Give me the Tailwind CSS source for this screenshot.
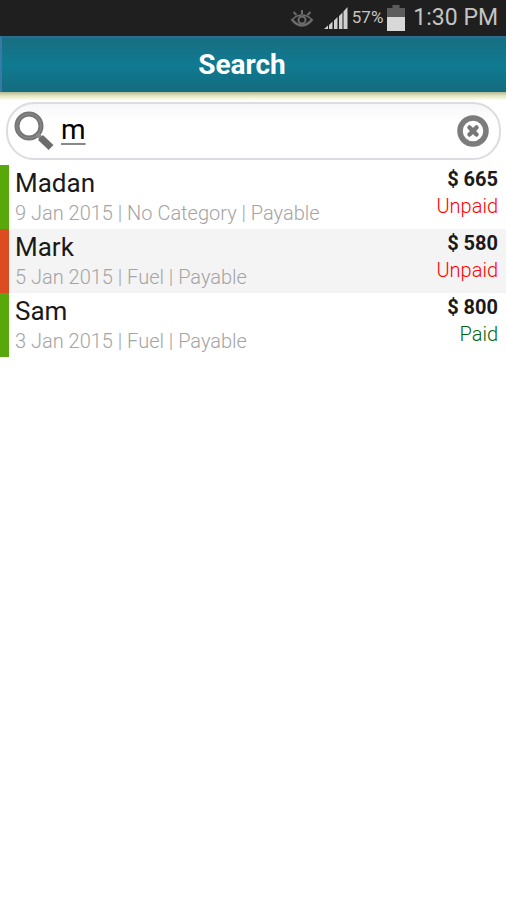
<!DOCTYPE html>
<html lang="en">
<head>
    <meta charset="UTF-8">
    <meta name="viewport" content="width=device-width, initial-scale=1.0">
    <title>Search</title>
    <script src="https://cdn.jsdelivr.net/npm/@tailwindcss/browser@4"></script>
</head>
<body class="min-h-screen bg-white font-[Roboto,sans-serif] text-[#1a1a1a]">

<!-- Status bar -->
<div class="flex h-9 items-center justify-end bg-[#1f1f1f] pr-2 text-[#c4c4c4]">
    <svg class="mr-2.5 h-5 w-6" viewBox="0 0 24 20" fill="none" stroke="#6c6c6c" stroke-width="2.500" aria-hidden="true">
        <path d="M1.500 11C5 15.500 8.500 17.500 12 17.500S19 15.500 22.500 11"/>
        <path d="M3 11C6 8 9 7 12 7s6 1 9 4" stroke-width="1.500"/>
        <circle cx="12" cy="12" r="3.500" stroke-width="2"/>
        <path d="M12 6V2M6.500 7L3.500 4M17.500 7L20.500 4" stroke-width="2"/>
    </svg>
    <svg class="mr-1 h-[22px] w-6" viewBox="0 0 24 22" fill="#d0d0d0" aria-hidden="true">
        <path d="M0 22L4 18.500V22zM5 18L8.500 14.500V22H5zM10 13.500L13.500 10V22H10zM15 9L18.500 5.500V22H15zM19.500 4.500L23.500 0V22H19.500z"/>
    </svg>
    <span class="text-[17px]">57%</span>
    <svg class="mr-2 ml-1 h-[26px] w-[18px]" viewBox="0 0 18 26" aria-hidden="true">
        <path d="M5.500 0H12.500V3H18V12H0V3H5.500z" fill="#5c5c5c"/>
        <path d="M0 12H18V26H0z" fill="#d8d8d8"/>
    </svg>
    <span class="text-[23px]">1:30 PM</span>
</div>

<!-- Title bar -->
<header class="flex h-14 items-center justify-center border-t-2 border-l-2 border-t-[#2b6c94] border-l-[#3a78a8] bg-linear-to-b from-[#176e81] via-[#0f7a92] to-[#146c7e] pr-6">
    <h1 class="text-[28px] font-bold text-white">Search</h1>
</header>
<div class="h-2 bg-linear-to-b from-[#b5b795] via-[#e4e8bd] to-[#fdfdf5]"></div>

<main>
    <form class="mt-0.5 mr-[5px] mb-[5px] ml-1.5 flex h-[58px] items-center rounded-[28px] border-2 border-[#dcdce0] bg-linear-to-b from-[#f6f6f8] via-white via-30% to-white pr-2.5 pl-1.5" onsubmit="return false">
        <svg class="h-10 w-10 shrink-0" viewBox="0 0 40 40" fill="none" aria-hidden="true">
            <circle cx="15" cy="15" r="12" stroke="#747474" stroke-width="5"/>
            <circle cx="15" cy="15" r="12" stroke="#858585" stroke-width="1.500"/>
            <path d="M23 23L28 28" stroke="#8a8a8a" stroke-width="4"/>
            <path d="M26.500 26.500L37 36.500" stroke="#6c6c6c" stroke-width="7"/>
        </svg>
        <input id="query" type="text" value="m" aria-label="Search" class="ml-[7px] h-12 min-w-0 flex-1 pb-1 text-[28px] text-black underline decoration-[#888] decoration-2 underline-offset-4 outline-none">
        <button type="button" id="clear" aria-label="Clear" class="shrink-0">
            <svg class="h-8 w-8" viewBox="0 0 32 32" fill="none" aria-hidden="true">
                <circle cx="16" cy="16" r="13" stroke="#7c7c7c" stroke-width="5.500"/>
                <path d="M12.500 12.500L19.500 19.500M19.500 12.500L12.500 19.500" stroke="#777" stroke-width="4.500" stroke-linecap="round"/>
            </svg>
        </button>
    </form>

    <!-- Results -->
    <ul>
        <li class="flex h-16 justify-between border-l-[9px] border-[#58a80c] pr-2 pl-1.5">
            <div>
                <h2 class="pt-1 text-[26px] leading-7">Madan</h2>
                <p class="text-xl leading-8 font-light text-[#a4a4a4]">9 Jan 2015 | No Category | Payable</p>
            </div>
            <div class="pt-px text-right text-xl leading-[27px]">
                <p class="font-bold">$ 665</p>
                <p class="font-light text-[#ff0000]">Unpaid</p>
            </div>
        </li>
        <li class="flex h-16 justify-between border-l-[9px] border-[#dc4c20] bg-[#f4f4f4] pr-2 pl-1.5">
            <div>
                <h2 class="pt-1 text-[26px] leading-7">Mark</h2>
                <p class="text-xl leading-8 font-light text-[#a4a4a4]">5 Jan 2015 | Fuel | Payable</p>
            </div>
            <div class="pt-px text-right text-xl leading-[27px]">
                <p class="font-bold">$ 580</p>
                <p class="font-light text-[#ff0000]">Unpaid</p>
            </div>
        </li>
        <li class="flex h-16 justify-between border-l-[9px] border-[#58a80c] pr-2 pl-1.5">
            <div>
                <h2 class="pt-1 text-[26px] leading-7">Sam</h2>
                <p class="text-xl leading-8 font-light text-[#a4a4a4]">3 Jan 2015 | Fuel | Payable</p>
            </div>
            <div class="pt-px text-right text-xl leading-[27px]">
                <p class="font-bold">$ 800</p>
                <p class="font-light text-[#006410]">Paid</p>
            </div>
        </li>
    </ul>
</main>

<script>
    document.getElementById('clear').addEventListener('click', () => {
        const query = document.getElementById('query');
        query.value = '';
        query.focus();
    });
</script>

</body>
</html>
